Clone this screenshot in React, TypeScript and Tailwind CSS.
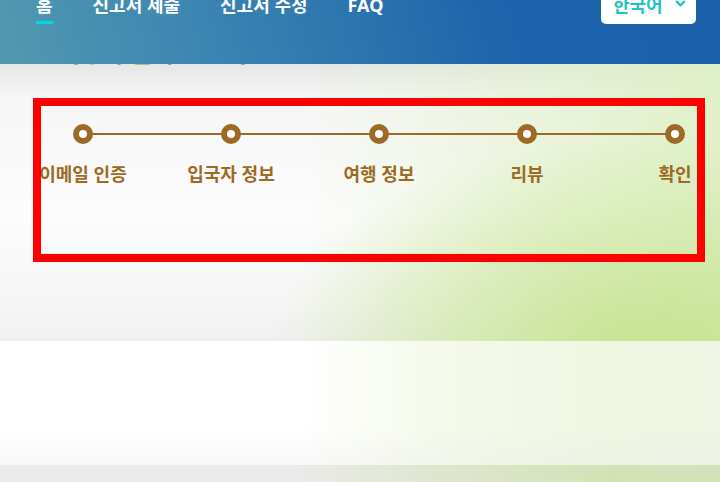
import React from "react";
import { ChevronDown } from "lucide-react";

const FONT = "font-['Noto_Sans','Noto_Sans_CJK_KR',sans-serif]";

const steps = ["이메일 인증", "입국자 정보", "여행 정보", "리뷰", "확인"];

export default function App() {
  return (
    <div className={`relative w-[720px] h-[482px] overflow-hidden bg-white ${FONT}`}>
      {/* Header */}
      <header className="relative z-10 h-[64px] bg-[linear-gradient(75deg,#5299b0_0%,#3a84b2_30%,#1c64ab_70%,#1a61aa_100%)] flex justify-between">
        <nav className="flex gap-[40px] pl-[36px] mt-[-7px]">
          {["홈", "신고서 제출", "신고서 수정", "FAQ"].map((t, i) => (
            <div key={t} className="flex flex-col items-stretch">
              <span className="text-[18px] leading-[24px] font-bold text-white whitespace-nowrap">{t}</span>
              {i === 0 && <span className="mt-[4px] h-[3px] bg-[#00d8e8]" />}
            </div>
          ))}
        </nav>
        <div className="mr-[24px] mt-[-16px] w-[95px] h-[40px] bg-white rounded-[5px] flex items-center pl-[12px] gap-[10px]">
          <span className="text-[18px] font-bold text-[#1fc3c2] leading-none mt-[2px]">한국어</span>
          <ChevronDown size={15} strokeWidth={3.5} className="text-[#1fc3c2] mt-[-1px]" />
        </div>
      </header>

      {/* Section 1 */}
      <section className="relative flex flex-col h-[277px] bg-[radial-gradient(ellipse_380px_220px_at_650px_290px,rgba(196,226,140,0.95),rgba(196,226,140,0)_100%),linear-gradient(90deg,rgba(222,240,195,0)_42%,rgba(222,240,195,0.9)_100%),linear-gradient(180deg,#e6e6e6_0%,#f6f6f6_12%,#fcfcfc_55%,#f6f6f6_85%,#f0f0f0_100%)]">
        <div className="mt-[-27px] pl-[58px] text-[24px] leading-[32px] font-bold text-[#b8862b] whitespace-nowrap">
          여행자 입국 신고서
        </div>
        <div className="relative flex gap-[48px] pl-[33px] mt-[55px]">
          <div className="absolute left-[83px] w-[592px] top-[9px] h-[2px] bg-[#9c6a24]" />
          {steps.map((s) => (
            <div key={s} className="relative w-[100px] shrink-0 flex flex-col items-center">
              <div className="w-[20px] h-[20px] rounded-full border-[6px] border-[#9c6a24] bg-white" />
              <span className="mt-[18px] text-[18px] leading-[24px] font-bold text-[#9c6a24] whitespace-nowrap">{s}</span>
            </div>
          ))}
        </div>
      </section>

      {/* Section 2 */}
      <section className="h-[124px] bg-[linear-gradient(180deg,rgba(255,255,255,0)_70%,rgba(235,235,235,0.35)_100%),linear-gradient(90deg,#ffffff_0%,#ffffff_42%,#f5faec_60%,#eef6e0_85%,#eef5e2_100%)]" />

      {/* Bottom band */}
      <div className="h-[17px] bg-[linear-gradient(90deg,#ebebeb_0%,#ebebeb_40%,#dfe6cf_60%,#d3e2b6_85%,#d4e2ba_100%)]" />

      {/* Annotation box */}
      <div className="absolute left-[33px] top-[98px] w-[672px] h-[164px] border-[8px] border-[#ff0000] pointer-events-none" />
    </div>
  );
}
